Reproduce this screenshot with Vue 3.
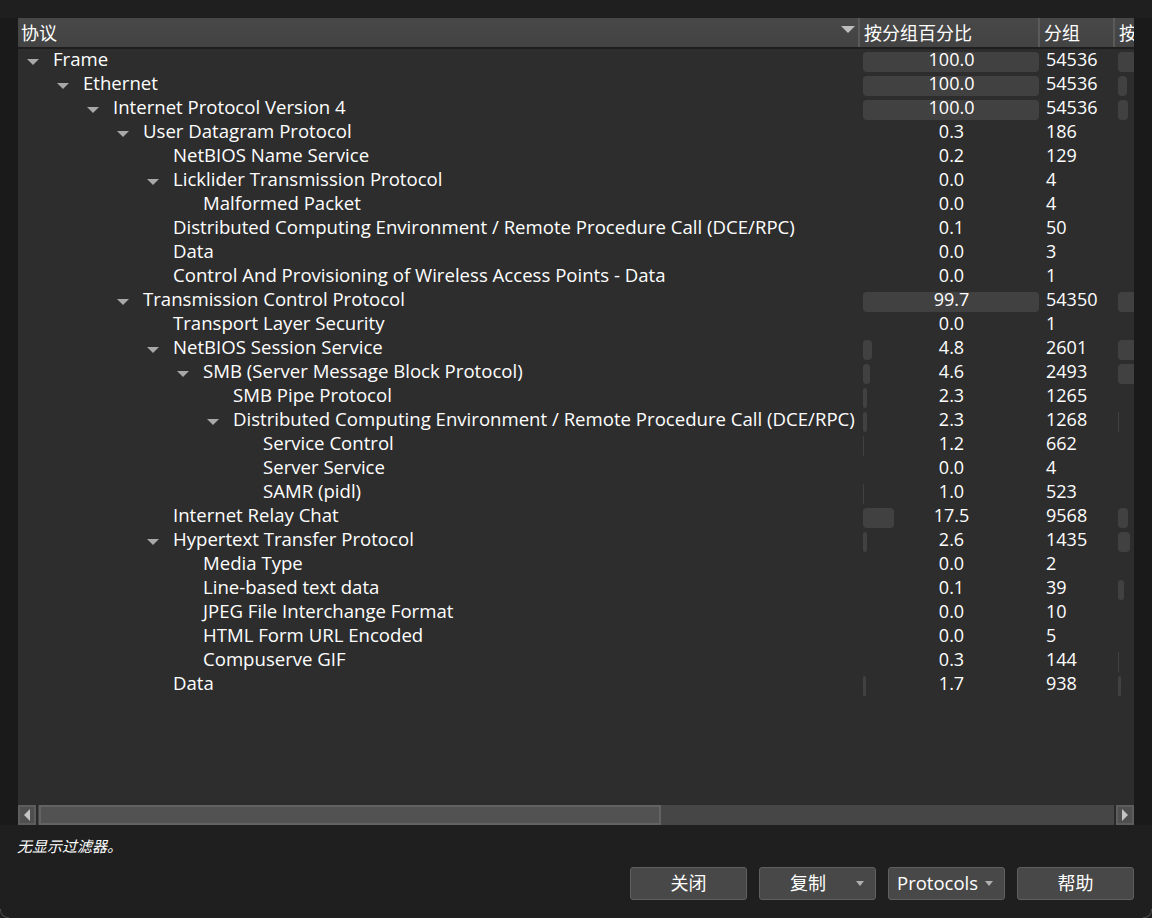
<script setup>
const rows = [
  { name: 'Frame', depth: 0, open: true, pct: '100.0', count: '54536', bar: 176, bar2: 18 },
  { name: 'Ethernet', depth: 1, open: true, pct: '100.0', count: '54536', bar: 176, bar2: 9 },
  { name: 'Internet Protocol Version 4', depth: 2, open: true, pct: '100.0', count: '54536', bar: 176, bar2: 10 },
  { name: 'User Datagram Protocol', depth: 3, open: true, pct: '0.3', count: '186' },
  { name: 'NetBIOS Name Service', depth: 4, pct: '0.2', count: '129' },
  { name: 'Licklider Transmission Protocol', depth: 4, open: true, pct: '0.0', count: '4' },
  { name: 'Malformed Packet', depth: 5, pct: '0.0', count: '4' },
  { name: 'Distributed Computing Environment / Remote Procedure Call (DCE/RPC)', depth: 4, pct: '0.1', count: '50' },
  { name: 'Data', depth: 4, pct: '0.0', count: '3' },
  { name: 'Control And Provisioning of Wireless Access Points - Data', depth: 4, pct: '0.0', count: '1' },
  { name: 'Transmission Control Protocol', depth: 3, open: true, pct: '99.7', count: '54350', bar: 176, bar2: 18 },
  { name: 'Transport Layer Security', depth: 4, pct: '0.0', count: '1' },
  { name: 'NetBIOS Session Service', depth: 4, open: true, pct: '4.8', count: '2601', bar: 9, bar2: 18 },
  { name: 'SMB (Server Message Block Protocol)', depth: 5, open: true, pct: '4.6', count: '2493', bar: 7, bar2: 18 },
  { name: 'SMB Pipe Protocol', depth: 6, pct: '2.3', count: '1265', bar: 4 },
  { name: 'Distributed Computing Environment / Remote Procedure Call (DCE/RPC)', depth: 6, open: true, pct: '2.3', count: '1268', bar: 4, bar2: 1 },
  { name: 'Service Control', depth: 7, pct: '1.2', count: '662', bar: 1 },
  { name: 'Server Service', depth: 7, pct: '0.0', count: '4' },
  { name: 'SAMR (pidl)', depth: 7, pct: '1.0', count: '523', bar: 1 },
  { name: 'Internet Relay Chat', depth: 4, pct: '17.5', count: '9568', bar: 31, bar2: 10 },
  { name: 'Hypertext Transfer Protocol', depth: 4, open: true, pct: '2.6', count: '1435', bar: 4, bar2: 12 },
  { name: 'Media Type', depth: 5, pct: '0.0', count: '2' },
  { name: 'Line-based text data', depth: 5, pct: '0.1', count: '39', bar2: 6 },
  { name: 'JPEG File Interchange Format', depth: 5, pct: '0.0', count: '10' },
  { name: 'HTML Form URL Encoded', depth: 5, pct: '0.0', count: '5' },
  { name: 'Compuserve GIF', depth: 5, pct: '0.3', count: '144', bar2: 1 },
  { name: 'Data', depth: 4, pct: '1.7', count: '938', bar: 3, bar2: 3 },
]
</script>

<template>
  <div class="dialog">
    <div class="table">
      <div class="head">
        <div class="hcell first">协议<span class="sort"></span></div>
        <div class="hcell">按分组百分比</div>
        <div class="hcell">分组</div>
        <div class="hcell">按</div>
      </div>
      <div class="body">
        <div class="row" v-for="(r, i) in rows" :key="i">
          <div class="name" :style="{ paddingLeft: r.depth * 30 + 9 + 'px' }">
            <span class="arrow" :class="{ hidden: !r.open }"></span>{{ r.name }}
          </div>
          <div class="pct">
            <span v-if="r.bar" class="bar" :style="{ width: r.bar + 'px' }"></span>
            <span class="val">{{ r.pct }}</span>
          </div>
          <div class="count">{{ r.count }}</div>
          <div class="extra">
            <span v-if="r.bar2" class="bar" :style="{ width: r.bar2 + 'px' }"></span>
          </div>
        </div>
      </div>
      <div class="hscroll">
        <div class="sbtn"><span class="tri-left"></span></div>
        <div class="track">
          <div class="thumb"></div>
        </div>
        <div class="sbtn"><span class="tri-right"></span></div>
      </div>
    </div>
    <div class="status">无显示过滤器。</div>
    <div class="buttons">
      <button class="btn">关闭</button>
      <button class="btn split"><span class="label">复制</span><span class="caret"></span></button>
      <button class="btn proto">Protocols<span class="caret"></span></button>
      <button class="btn">帮助</button>
    </div>
    <span class="corner left"></span>
    <span class="corner right"></span>
  </div>
</template>

<style>
html, body {
  margin: 0;
  background: #1f1f1f;
}
</style>

<style scoped>
.dialog {
  position: relative;
  width: 1152px;
  height: 918px;
  box-sizing: border-box;
  padding: 18px;
  display: flex;
  flex-direction: column;
  background: #1f1f1f;
  color: #fff;
  font-family: "Open Sans", "Noto Sans CJK SC", sans-serif;
  font-size: 18px;
  overflow: hidden;
}
.corner {
  position: absolute;
  bottom: 0;
  width: 8px;
  height: 8px;
  border-bottom: 1px solid #4c4c4c;
}
.corner.left {
  left: 0;
  border-left: 1px solid #4c4c4c;
  border-bottom-left-radius: 8px;
}
.corner.right {
  right: 0;
  border-right: 1px solid #4c4c4c;
  border-bottom-right-radius: 8px;
}
.table {
  height: 808px;
  background: #2d2d2d;
  display: flex;
  flex-direction: column;
  box-shadow: -18px 0 #1a1a1a, 18px 0 #1a1a1a;
}
.head {
  height: 29px;
  display: grid;
  grid-template-columns: 842px 180px 75px 19px;
  background: linear-gradient(#484848, #434343);
  border-bottom: 2px solid #1e1e1e;
  overflow: hidden;
}
.hcell {
  padding-left: 3px;
  line-height: 31px;
  font-size: 18px;
  border-right: 2px solid #5a5a5a;
  white-space: nowrap;
  position: relative;
}
.hcell + .hcell {
  padding-left: 4px;
}
.hcell:last-child {
  border-right: none;
  padding-left: 4px;
}
.sort {
  position: absolute;
  right: 3px;
  top: 8px;
  border-left: 7px solid transparent;
  border-right: 7px solid transparent;
  border-top: 7px solid #bdbdbd;
}
.body {
  flex: 1;
  padding-top: 1px;
}
.row {
  height: 24px;
  display: grid;
  grid-template-columns: 845px 177px 75px 19px;
  align-items: start;
  line-height: 19px;
  white-space: nowrap;
}
.name {
  display: flex;
  align-items: center;
  font-size: 18.6px;
  margin-top: -1px;
}
.arrow {
  width: 0;
  height: 0;
  border-left: 6px solid transparent;
  border-right: 6px solid transparent;
  border-top: 6px solid #a8a8a8;
  margin-top: 7px;
  margin-right: 14px;
  flex: none;
}
.arrow.hidden {
  visibility: hidden;
}
.pct {
  position: relative;
  height: 24px;
  text-align: center;
}
.val {
  position: relative;
}
.bar {
  position: absolute;
  left: 0;
  top: 2px;
  height: 20px;
  background: #414141;
  border-radius: 4px;
}
.count {
  padding-left: 6px;
}
.extra {
  position: relative;
  height: 24px;
  overflow: hidden;
}
.extra .bar {
  left: 3px;
}
.hscroll {
  height: 20px;
  display: flex;
  background: #464646;
}
.sbtn {
  width: 18px;
  height: 20px;
  box-sizing: border-box;
  background: #4f4f4f;
  border: 2px solid #5d5d5d;
  display: flex;
  align-items: center;
  justify-content: center;
  flex: none;
}
.tri-left {
  border-top: 6px solid transparent;
  border-bottom: 6px solid transparent;
  border-right: 6px solid #c4c4c4;
}
.tri-right {
  border-top: 6px solid transparent;
  border-bottom: 6px solid transparent;
  border-left: 6px solid #c4c4c4;
}
.track {
  flex: 1;
  padding-left: 1px;
  border-left: 2px solid #2a2a2a;
  border-right: 2px solid #2a2a2a;
}
.thumb {
  width: 622px;
  height: 20px;
  box-sizing: border-box;
  background: #525252;
  border: 2px solid #636363;
}
.status {
  margin-top: 12px;
  font-size: 15px;
  font-style: italic;
  line-height: 19px;
  margin-left: -1px;
}
.buttons {
  margin-top: 11px;
  display: flex;
  justify-content: flex-end;
  gap: 12px;
}
.btn {
  width: 117px;
  height: 33px;
  padding: 0 0 3px;
  border: 1px solid #5f5f5f;
  border-radius: 3px;
  background: #484848;
  color: #fff;
  font-family: inherit;
  font-size: 18px;
  display: flex;
  align-items: center;
  justify-content: center;
}
.split {
  justify-content: flex-start;
  padding-left: 30px;
}
.split .label {
  margin-right: 30px;
}
.proto {
  gap: 7px;
  justify-content: flex-start;
  padding-left: 8px;
  font-size: 18.5px;
}
.caret {
  border-left: 4px solid transparent;
  border-right: 4px solid transparent;
  border-top: 5px solid #b0b0b0;
  margin-top: 3px;
}
</style>
